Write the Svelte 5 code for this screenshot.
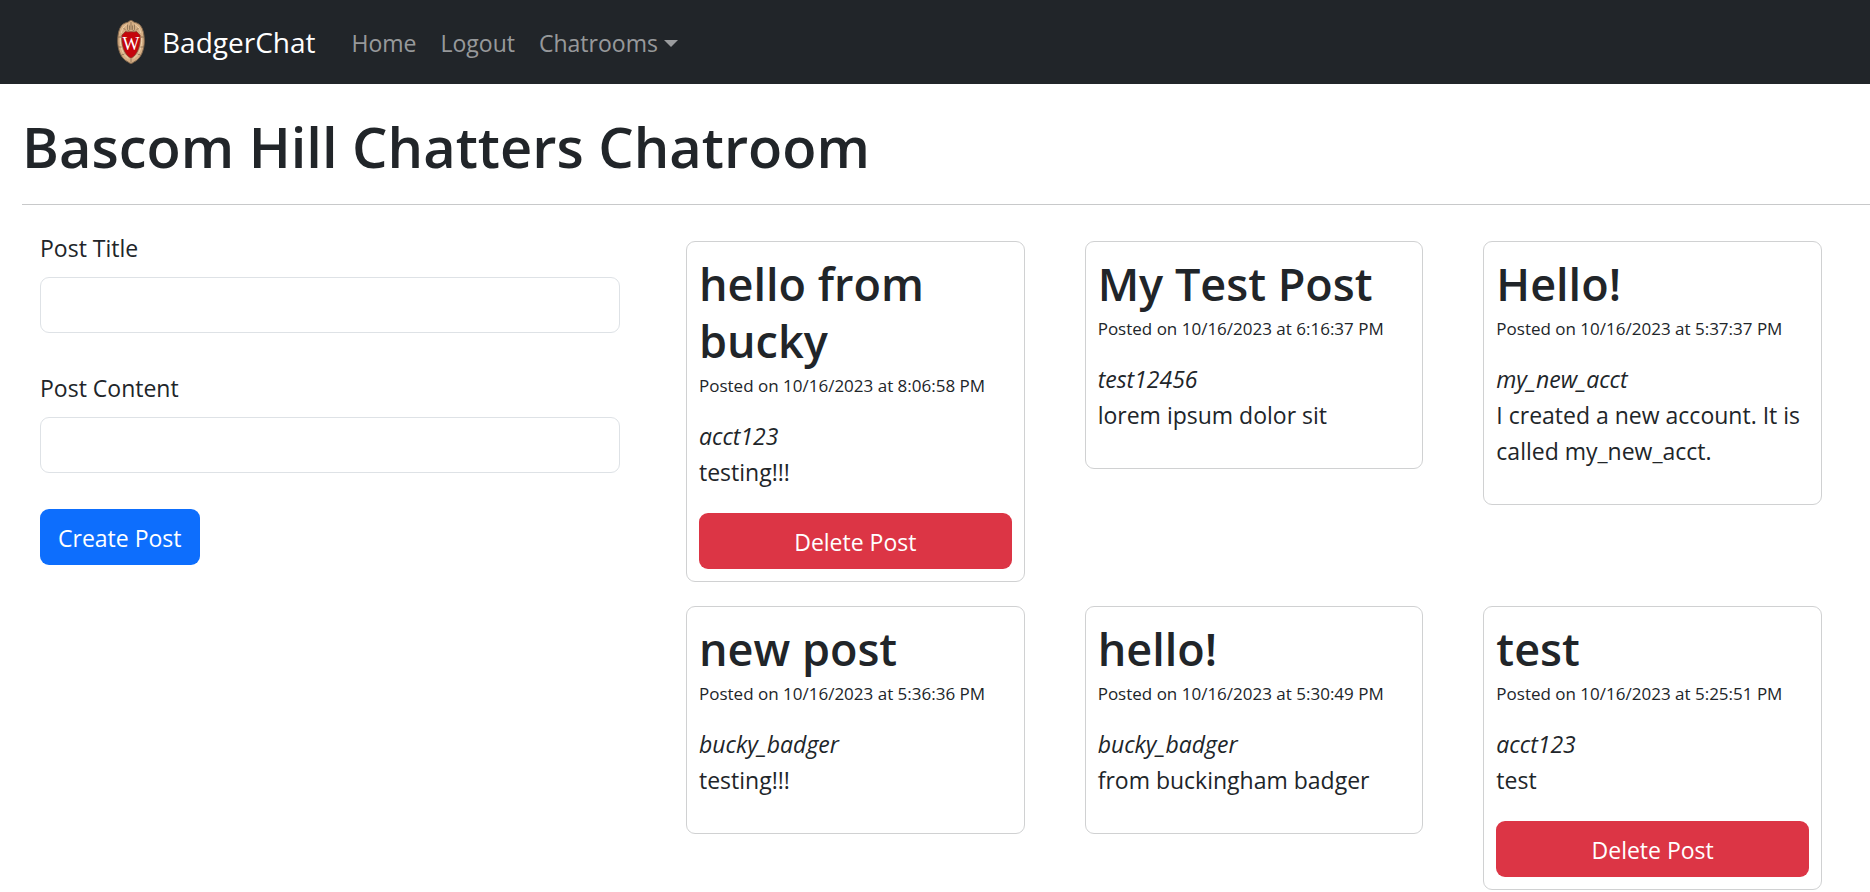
<script>
	let title = "";
	let content = "";

	let posts = [
		{ id: 6, title: "hello from bucky", date: "10/16/2023", time: "8:06:58 PM", poster: "acct123", content: "testing!!!", mine: true },
		{ id: 5, title: "My Test Post", date: "10/16/2023", time: "6:16:37 PM", poster: "test12456", content: "lorem ipsum dolor sit", mine: false },
		{ id: 4, title: "Hello!", date: "10/16/2023", time: "5:37:37 PM", poster: "my_new_acct", content: "I created a new account. It is called my_new_acct.", mine: false },
		{ id: 3, title: "new post", date: "10/16/2023", time: "5:36:36 PM", poster: "bucky_badger", content: "testing!!!", mine: false },
		{ id: 2, title: "hello!", date: "10/16/2023", time: "5:30:49 PM", poster: "bucky_badger", content: "from buckingham badger", mine: false },
		{ id: 1, title: "test", date: "10/16/2023", time: "5:25:51 PM", poster: "acct123", content: "test", mine: true }
	];

	function createPost() {
		if (!title || !content) {
			return;
		}
		const now = new Date();
		posts = [
			{
				id: posts.length ? posts[0].id + 1 : 1,
				title,
				content,
				date: now.toLocaleDateString("en-US"),
				time: now.toLocaleTimeString("en-US"),
				poster: "acct123",
				mine: true
			},
			...posts
		];
		title = "";
		content = "";
	}

	function deletePost(id) {
		posts = posts.filter((post) => post.id !== id);
	}
</script>

<header>
	<nav>
		<a class="brand" href="/">
			<svg class="crest" viewBox="0 0 28 44" aria-hidden="true">
				<path
					d="M14 .5c1.6 0 2.2 1.4 3.4 1.8 2.3.5 4.6 1.4 6.2 3.4 2.6 3.4 3.7 9 3.7 15.3 0 9.5-3.7 17.5-9.3 20.4-1.7.7-2.6 2.1-4 2.1s-2.300-1.400-4-2.100C4.400 38.500.7 30.500.7 21c0-6.300 1.100-11.900 3.700-15.300 1.600-2 3.900-2.900 6.200-3.400C11.800 1.900 12.400.5 14 .5z"
					fill="#d5ae84"
					stroke="#80664c"
				/>
				<path
					d="M4.200 13C5.500 7.500 8 5 10.500 4.600M23.800 13C22.500 7.500 20 5 17.500 4.600M3.400 18c-.6 8.500 2.400 17 8 20.500M24.600 18c.6 8.500-2.400 17-8 20.500"
					fill="none"
					stroke="#efd2ac"
				/>
				<path
					d="M1 17h3M27 17h-3M1.500 27h3M26.500 27h-3M4.500 35l3-1M23.500 35l-3-1M10.500 4.500v5c0 1.500 2 1.500 2 0v-4M17.500 4.500v5c0 1.500-2 1.500-2 0v-4M14 2v8M6.500 8l2.500 2.500M21.500 8L19 10.500M14 39v3.500"
					fill="none"
					stroke="#846b50"
					stroke-width=".8"
				/>
				<path
					d="M8.500 11.500c2 .8 3.500.3 5.500.3s3.500.5 5.500-.3c1.500 1.500 2.500 2.500 3.600 3.700C24 25 20.600 35 14 38.200 7.400 35 4 25 4.900 15.200 6 14 7 13 8.500 11.500z"
					fill="#c5050c"
					stroke="#7a4030"
					stroke-width=".7"
				/>
				<text x="14" y="30" text-anchor="middle">W</text>
			</svg>
			BadgerChat
		</a>
		<a class="link" href="/">Home</a>
		<a class="link" href="/logout">Logout</a>
		<button class="link dropdown" type="button" aria-haspopup="true">Chatrooms<span class="caret"></span></button>
	</nav>
</header>

<main>
	<h1>Bascom Hill Chatters Chatroom</h1>
	<hr />
	<div class="row">
		<form on:submit|preventDefault={createPost}>
			<label for="post-title">Post Title</label>
			<input id="post-title" type="text" bind:value={title} />
			<label for="post-content">Post Content</label>
			<input id="post-content" type="text" bind:value={content} />
			<button class="btn primary" type="submit">Create Post</button>
		</form>
		<div class="posts">
			{#each posts as post (post.id)}
				<article class="card">
					<h2>{post.title}</h2>
					<small>Posted on {post.date} at {post.time}</small>
					<i>{post.poster}</i>
					<p>{post.content}</p>
					{#if post.mine}
						<button class="btn danger" type="button" on:click={() => deletePost(post.id)}>Delete Post</button>
					{/if}
				</article>
			{/each}
		</div>
	</div>
</main>

<style>
	:global(body) {
		margin: 0;
		background: #fff;
		color: #212529;
		font-family: "Segoe UI", "Open Sans", "Noto Sans", sans-serif;
		font-size: 23px;
		line-height: 36px;
	}

	header {
		background: #212529;
	}

	nav {
		display: flex;
		flex-wrap: wrap;
		align-items: center;
		box-sizing: border-box;
		max-width: 1710px;
		min-height: 84px;
		margin: 0 auto;
		padding: 0 37px;
	}

	.brand {
		display: flex;
		align-items: center;
		gap: 17px;
		margin-right: 24px;
		color: #fff;
		font-size: 28px;
		text-decoration: none;
	}

	.crest {
		width: 28px;
		height: 44px;
	}

	.crest text {
		fill: #fff;
		font-family: "Liberation Serif", serif;
		font-size: 18px;
	}

	.link {
		padding: 13px 12px 11px;
		border: 0;
		background: none;
		color: rgba(255, 255, 255, 0.55);
		font: inherit;
		text-decoration: none;
		cursor: pointer;
	}

	.dropdown {
		display: flex;
		align-items: center;
		gap: 6px;
	}

	.caret {
		border-top: 7px solid;
		border-right: 7px solid transparent;
		border-left: 7px solid transparent;
	}

	main {
		padding: 26px 0 12px 22px;
	}

	h1 {
		margin: 0;
		font-size: 56px;
		font-weight: 600;
		line-height: 72px;
	}

	hr {
		margin: 22px 0 24px;
		border: 0;
		border-top: 1px solid #c8c9ca;
	}

	.row {
		display: grid;
		grid-template-columns: 1fr 2fr;
		align-items: start;
	}

	form {
		padding: 0 18px;
	}

	label {
		display: block;
		padding-top: 1px;
		margin-bottom: 11px;
	}

	input {
		display: block;
		box-sizing: border-box;
		width: 100%;
		height: 56px;
		margin-bottom: 36px;
		padding: 8px 18px;
		border: 1px solid #dee2e6;
		border-radius: 9px;
		background: #fff;
		color: inherit;
		font: inherit;
	}

	.btn {
		padding: 11px 18px 9px;
		border: 0;
		border-radius: 9px;
		color: #fff;
		font: inherit;
		cursor: pointer;
	}

	.primary {
		background: #0d6efd;
	}

	.danger {
		background: #dc3545;
	}

	.posts {
		display: grid;
		grid-template-columns: repeat(3, 1fr);
		align-items: start;
		padding: 0 18px;
	}

	.card {
		display: flex;
		flex-direction: column;
		margin: 12px 30px;
		padding: 13px 12px 12px;
		border: 1px solid #d0d1d2;
		border-radius: 9px;
	}

	h2 {
		margin: 0;
		font-size: 45px;
		font-weight: 600;
		line-height: 57px;
	}

	small {
		margin-bottom: 15px;
		font-size: 17px;
		line-height: 34px;
	}

	p {
		margin: 0 0 23px;
	}

	@media (max-width: 1400px) {
		.row {
			grid-template-columns: 1fr;
			gap: 24px;
		}

		.posts {
			grid-template-columns: repeat(auto-fill, minmax(340px, 1fr));
		}
	}
</style>
